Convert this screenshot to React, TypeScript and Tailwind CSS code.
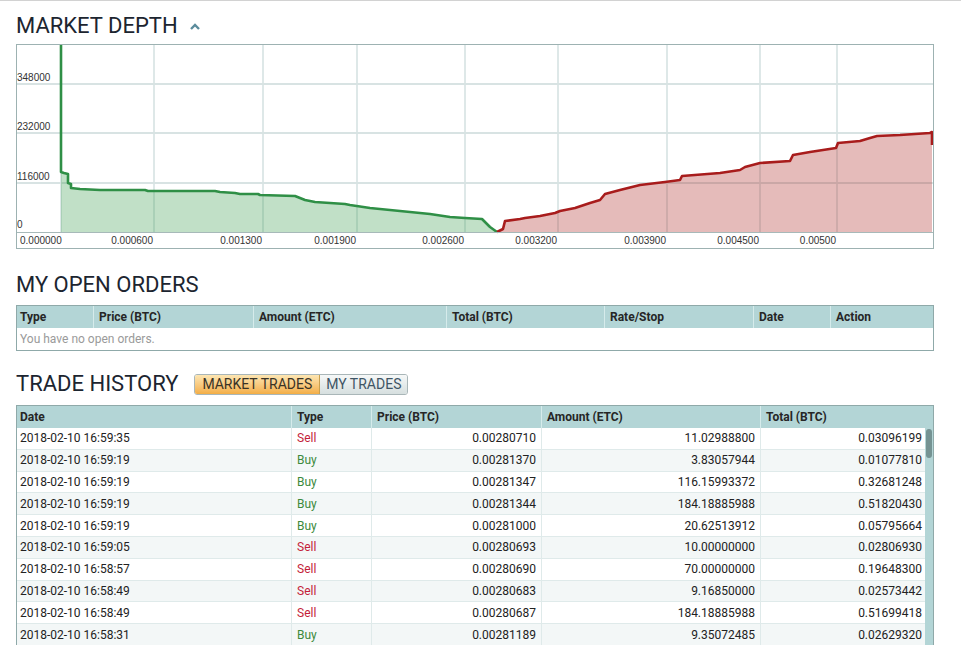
import { FC } from 'react'

type Trade = [string, 'Buy' | 'Sell', string, string, string]

const trades: Trade[] = [
  ['2018-02-10 16:59:35', 'Sell', '0.00280710', '11.02988800', '0.03096199'],
  ['2018-02-10 16:59:19', 'Buy', '0.00281370', '3.83057944', '0.01077810'],
  ['2018-02-10 16:59:19', 'Buy', '0.00281347', '116.15993372', '0.32681248'],
  ['2018-02-10 16:59:19', 'Buy', '0.00281344', '184.18885988', '0.51820430'],
  ['2018-02-10 16:59:19', 'Buy', '0.00281000', '20.62513912', '0.05795664'],
  ['2018-02-10 16:59:05', 'Sell', '0.00280693', '10.00000000', '0.02806930'],
  ['2018-02-10 16:58:57', 'Sell', '0.00280690', '70.00000000', '0.19648300'],
  ['2018-02-10 16:58:49', 'Sell', '0.00280683', '9.16850000', '0.02573442'],
  ['2018-02-10 16:58:49', 'Sell', '0.00280687', '184.18885988', '0.51699418'],
  ['2018-02-10 16:58:31', 'Buy', '0.00281189', '9.35072485', '0.02629320'],
]

// depth curves, page coordinates (converted below)
const bids = [
  [61, 44], [61, 172], [64, 173], [68, 174], [68, 183], [71, 184], [71, 188], [80, 189],
  [100, 190], [145, 190], [148, 191], [215, 191], [220, 192], [235, 193], [240, 194],
  [258, 194], [260, 195], [295, 196], [300, 198], [305, 200], [315, 202], [345, 204],
  [350, 205], [370, 208], [400, 211], [430, 214], [450, 217], [465, 218], [482, 219],
  [485, 222], [490, 227], [497, 232],
]
const asks = [
  [497, 232], [503, 229], [505, 221], [520, 219], [525, 218], [540, 216], [555, 213],
  [560, 211], [575, 208], [590, 203], [600, 200], [605, 194], [620, 190], [640, 185],
  [665, 182], [680, 180], [682, 176], [720, 173], [740, 170], [745, 167], [760, 163],
  [790, 161], [793, 155], [810, 152], [836, 148], [838, 143], [860, 141], [870, 138],
  [877, 136], [900, 135], [930, 133], [932, 132], [932, 145],
]

const OX = 17
const OY = 45
const pts = (a: number[][]) => a.map(([x, y]) => `${x - OX},${y - OY}`).join(' ')

const vGrid = [61, 154, 263, 357, 465, 558, 667, 760, 837]
const hGrid = [84, 133, 183]
const yLabels: [string, number][] = [['348000', 81], ['232000', 130], ['116000', 180], ['0', 228]]
const xLabels = ['0.000600', '0.001300', '0.001900', '0.002600', '0.003200', '0.003900', '0.004500', '0.00500']

const DepthChart: FC = () => (
  <div className="mt-[5px] h-[205px] w-[918px] border border-[#9db2b2] bg-white">
    <svg width="916" height="203" className="block" style={{ fontFamily: '"Liberation Sans", Arial, sans-serif' }}>
      {vGrid.map((x) => (
        <line key={x} x1={x - OX} y1={0} x2={x - OX} y2={187} stroke="#d3e0e0" strokeWidth="1.5" />
      ))}
      {hGrid.map((y) => (
        <line key={y} x1={0} y1={y - OY} x2={916} y2={y - OY} stroke="#d8e3e3" strokeWidth="2" />
      ))}
      <polygon points={`${pts(bids.slice(1))} ${61 - OX},${232 - OY}`} fill="#339944" fillOpacity="0.3" />
      <polygon points={`${pts(asks)} ${932 - OX},${232 - OY}`} fill="#aa1f1a" fillOpacity="0.3" />
      <polyline points={pts(bids)} fill="none" stroke="#2f8f46" strokeWidth="2.6" strokeLinejoin="round" />
      <polyline points={pts(asks)} fill="none" stroke="#a81c1c" strokeWidth="2.6" strokeLinejoin="round" />
      <line x1={0} y1={187.5} x2={916} y2={187.5} stroke="#a7b9b9" strokeWidth="1" />
      {yLabels.map(([t, y]) => (
        <text key={t} x={0} y={y - OY} fontSize="10" fill="#333">{t}</text>
      ))}
      <text x={3} y={199} fontSize="10" fill="#333">0.000000</text>
      {xLabels.map((t, i) => (
        <text key={t} x={vGrid[i + 1] - OX - 1} y={199} fontSize="10" fill="#333" textAnchor="end">{t}</text>
      ))}
    </svg>
  </div>
)

const Title: FC<{ children: React.ReactNode }> = ({ children }) => (
  <h2 className="text-[22px] leading-[26px] text-[#1c2530] font-normal">{children}</h2>
)

const openCols = [
  ['Type', 'w-[77px]'],
  ['Price (BTC)', 'w-[160px]'],
  ['Amount (ETC)', 'w-[193px]'],
  ['Total (BTC)', 'w-[158px]'],
  ['Rate/Stop', 'w-[149px]'],
  ['Date', 'w-[77px]'],
  ['Action', 'w-[102px]'],
]

const tradeCols = [
  ['Date', 'w-[275px]'],
  ['Type', 'w-[80px]'],
  ['Price (BTC)', 'w-[170px]'],
  ['Amount (ETC)', 'w-[219px]'],
  ['Total (BTC)', 'w-[172px]'],
]

const App: FC = () => (
  <div className="min-h-[645px] w-[961px] border-t border-[#d2d2d2] bg-white font-['Roboto',sans-serif]">
    <div className="pl-4">
      <div className="mt-[12px] flex items-center">
        <Title>MARKET DEPTH</Title>
        <svg width="12" height="9" viewBox="0 0 12 9" className="ml-[11px] mt-[1px]">
          <polyline points="2,7 6,3 10,7" fill="none" stroke="#5b8c9c" strokeWidth="2.4" />
        </svg>
      </div>
      <DepthChart />

      <div className="mt-[23px]">
        <Title>MY OPEN ORDERS</Title>
      </div>
      <div className="mt-[7px] w-[918px] border border-[#8fa9a9] text-[12px]">
        <div className="flex h-[22px] bg-[#b3d5d6] font-bold text-[#262626]">
          {openCols.map(([t, w], i) => (
            <div
              key={t}
              className={`${w} flex items-center ${i === 0 ? 'pl-[3px]' : 'pl-[5px]'} ${i < openCols.length - 1 ? 'border-r border-[#d6ebeb]' : ''}`}
            >
              {t}
            </div>
          ))}
        </div>
        <div className="flex h-[22px] items-center pl-[3px] text-[#9a9a9a]">You have no open orders.</div>
      </div>

      <div className="mt-[20px] flex items-center">
        <Title>TRADE HISTORY</Title>
        <div className="ml-[16px] flex h-[21px] overflow-hidden rounded-[3px] border border-[#a9b6b8] text-[14px] leading-none">
          <div className="flex items-center border-r border-[#c9a04f] bg-gradient-to-b from-[#fde6b2] to-[#f3ae45] px-[7px] text-[#3a3326]">
            MARKET TRADES
          </div>
          <div className="flex items-center bg-gradient-to-b from-[#f6f8f8] to-[#d6dfdf] px-[6px] text-[#3f5565]">
            MY TRADES
          </div>
        </div>
      </div>

      <div className="mt-[8px] w-[918px] border-x border-t border-[#8fa9a9] text-[12px]">
        <div className="flex h-[22px] bg-[#b3d5d6] font-bold text-[#262626]">
          {tradeCols.map(([t, w], i) => (
            <div
              key={t}
              className={`${w} flex items-center ${i === 0 ? 'pl-[3px]' : 'pl-[5px]'} ${i < tradeCols.length - 1 ? 'border-r border-[#d6ebeb]' : ''}`}
            >
              {t}
            </div>
          ))}
        </div>
        <div className="flex">
          <div className="flex w-[908px] flex-col">
            {trades.map(([d, type, price, amount, total], i) => (
              <div
                key={i}
                className={`flex h-[21.8px] border-b border-[#dfeaea] text-[#222] ${i % 2 ? 'bg-[#f3f7f7]' : 'bg-white'}`}
              >
                <div className="flex w-[275px] items-center border-r border-[#dfeaea] pl-[3px]">{d}</div>
                <div
                  className={`flex w-[80px] items-center border-r border-[#dfeaea] pl-[5px] ${type === 'Sell' ? 'text-[#c41e3a]' : 'text-[#3b8a3b]'}`}
                >
                  {type}
                </div>
                <div className="flex w-[170px] items-center justify-end border-r border-[#dfeaea] pr-[5px]">{price}</div>
                <div className="flex w-[219px] items-center justify-end border-r border-[#dfeaea] pr-[5px]">{amount}</div>
                <div className="flex w-[164px] items-center justify-end pr-[3px]">{total}</div>
              </div>
            ))}
          </div>
          <div className="flex w-[8px] flex-col bg-[#b3d5d6]">
            <div className="mx-[1px] mt-[1px] h-[29px] rounded-[3px] bg-[#759393]" />
          </div>
        </div>
      </div>
    </div>
  </div>
)

export default App
